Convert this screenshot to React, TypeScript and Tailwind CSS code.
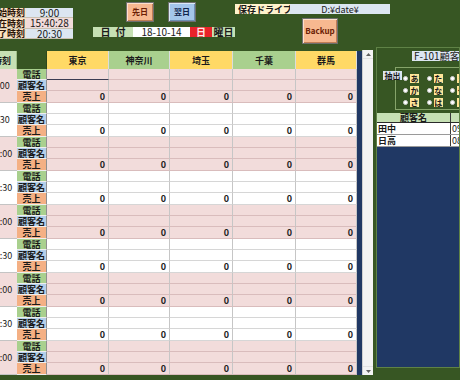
import React from "react";

const slots = ["9:00", "9:30", "10:00", "10:30", "11:00", "11:30", "12:00", "12:30", "13:00"];
const prefs = [
  { name: "東京", bg: "bg-[#ffd966]" },
  { name: "神奈川", bg: "bg-[#a9d08e]" },
  { name: "埼玉", bg: "bg-[#ffd966]" },
  { name: "千葉", bg: "bg-[#a9d08e]" },
  { name: "群馬", bg: "bg-[#ffd966]" },
];
const kinds = [
  { label: "電話", bg: "bg-[#a9d08e]", h: "h-[11px]" },
  { label: "顧客名", bg: "bg-[#b4cfea]", h: "h-[11px]" },
  { label: "売上", bg: "bg-[#f4b084]", h: "h-[12px]" },
];

const COLS = "grid grid-cols-[17px_30px_62px_61px_63px_63px_61px]";

function Top() {
  const info = [
    { l: "開始時刻", v: "9:00", vb: "bg-[#dce6f1]", h: "h-[10px]" },
    { l: "現在時刻", v: "15:40:28", vb: "bg-[#f2dcdb]", h: "h-[11px]" },
    { l: "終了時刻", v: "20:30", vb: "bg-[#dce6f1]", h: "h-[10px]" },
  ];
  const btn =
    "flex items-center justify-center border border-[#6f6f6f] text-[8px] font-bold";
  return (
    <div className="flex h-[47px] items-start">
      <div className="mt-[8px] w-[73px] flex flex-col">
        {info.map((r) => (
          <div key={r.l} className={`flex ${r.h} border-b border-[#c9c0b0]`}>
            <div className="w-[26px] overflow-hidden flex justify-end items-center bg-[#fbe2c2] pr-[1px]">
              <span className="shrink-0 whitespace-nowrap text-[9px] font-bold text-[#2a1408]">{r.l}</span>
            </div>
            <div className={`w-[47px] flex items-center justify-center ${r.vb} text-[10px] text-[#1a1a1a]`}>
              {r.v}
            </div>
          </div>
        ))}
      </div>
      <div className="ml-[20px] w-[142px] flex flex-col">
        <div className="flex pt-[2px] h-[22px]">
          <div
            className={`ml-[33px] w-[28px] h-[20px] ${btn} bg-[#f7b890] text-[#6b1d05] shadow-[inset_1px_1px_0_#fde0cc,inset_-1px_-1px_0_#c07d55]`}
          >
            先日
          </div>
          <div
            className={`ml-[14px] w-[28px] h-[20px] ${btn} bg-[#a4c6ea] text-[#10244a] shadow-[inset_1px_1px_0_#dbe9f7,inset_-1px_-1px_0_#6d8fb5]`}
          >
            翌日
          </div>
        </div>
        <div className="mt-[5px] flex h-[10px] text-[10px]">
          <div className="w-[40px] bg-[#c6e0b4] flex items-center justify-center font-bold tracking-[5px] pl-[5px]">日付</div>
          <div className="w-[57px] bg-white flex items-center justify-center">18-10-14</div>
          <div className="w-[22px] bg-[#e8232a] flex items-center justify-center text-[#ffe8e8] font-bold">日</div>
          <div className="w-[23px] bg-[#c6e0b4] flex items-center justify-center font-bold">曜日</div>
        </div>
      </div>
      <div className="w-[155px] flex flex-col">
        <div className="mt-[4px] flex h-[10px]">
          <div className="w-[55px] bg-[#fff2cc] flex items-center pl-[3px] text-[9px] font-bold whitespace-nowrap">保存ドライブ</div>
          <div className="w-[100px] bg-[#dce6f1] flex items-center justify-center text-[9px]">D:¥date¥</div>
        </div>
        <div
          className={`mt-[4px] ml-[67px] w-[36px] h-[26px] ${btn} bg-[#f7b890] text-[#6b1d05] shadow-[inset_1px_1px_0_#fde0cc,inset_-1px_-1px_0_#c07d55]`}
        >
          Backup
        </div>
      </div>
    </div>
  );
}

function Slot({ time, idx }: { time: string; idx: number }) {
  const pink = idx % 2 === 0;
  const rowBg = pink ? "bg-[#f2dcdb]" : "bg-white";
  const lineB = pink ? "border-[#d9bcbc]" : "border-[#d6d6d6]";
  return (
    <div className={`${COLS} grid-rows-[11px_11px_12px]`}>
      <div className={`row-span-3 ${rowBg} border-b border-[#c4c4c4] overflow-hidden flex items-center`}>
        <div className="w-[32px] -ml-[15px] shrink-0 text-center text-[9px] text-[#222]">{time}</div>
      </div>
      {kinds.map((k, ki) => (
        <React.Fragment key={k.label}>
          <div
            className={`${k.bg} border-b border-r border-b-[#eeeeee] border-r-[#8f8f8f] flex items-center justify-center text-[9px] font-bold text-[#1a1a1a] whitespace-nowrap overflow-hidden`}
          >
            {k.label}
          </div>
          {prefs.map((p, pi) => (
            <div
              key={p.name}
              className={`${rowBg} border-r border-r-[#c6c6c6] border-b ${
                idx === 0 && ki === 0 && pi === 0 ? "border-b-[#3c3c52]" : lineB
              } flex items-center justify-end pr-[3px] text-[9px] font-bold text-[#222]`}
            >
              {ki === 2 ? "0" : ""}
            </div>
          ))}
        </React.Fragment>
      ))}
    </div>
  );
}

function Grid() {
  return (
    <div className="mt-[4px] w-[357px] flex flex-col">
      <div className={`${COLS} h-[18px]`}>
        <div className="bg-[#c6e0b4] overflow-hidden flex items-center border-r border-[#9fbf86]">
          <div className="w-[32px] -ml-[14px] shrink-0 text-center text-[9px] font-bold">時刻</div>
        </div>
        <div className="bg-[#375623] border-r border-[#2c461b]" />
        {prefs.map((p) => (
          <div
            key={p.name}
            className={`${p.bg} border-r border-[#dcdcdc] flex items-center justify-center text-[9px] font-bold`}
          >
            {p.name}
          </div>
        ))}
      </div>
      {slots.map((t, i) => (
        <Slot key={t} time={t} idx={i} />
      ))}
    </div>
  );
}

function Scrollbar() {
  return (
    <div className="mt-[3px] w-[11px] h-[325px] bg-[#f3f3f3] border-l border-[#cfcfcf] flex flex-col justify-between">
      <div className="h-[9px] flex items-center justify-center border-b border-[#e2e2e2]">
        <svg width="5" height="3" viewBox="0 0 5 3">
          <path d="M0 3 L2.5 0 L5 3 Z" fill="#606060" />
        </svg>
      </div>
      <div className="h-[9px] flex items-center justify-center border-t border-[#e2e2e2]">
        <svg width="5" height="3" viewBox="0 0 5 3">
          <path d="M0 0 L2.5 3 L5 0 Z" fill="#606060" />
        </svg>
      </div>
    </div>
  );
}

function Radio({ ch }: { ch: string }) {
  return (
    <div className="flex items-center gap-[2px] h-[9px]">
      <div className="w-[5px] h-[5px] rounded-full bg-white border border-[#cfcfcf]" />
      <div className="w-[9px] h-[9px] bg-[#ffe699] flex items-center justify-center text-[8px] font-bold">{ch}</div>
    </div>
  );
}

function Panel() {
  const cols = [["あ", "か", "さ"], ["た", "な", "は"], ["ま", "や", "ら"]];
  return (
    <div className="w-[84px] h-[321px] border border-[#5f8246] bg-[#375623] flex flex-col overflow-hidden">
      <div className="mt-[3px] pl-[35px] h-[10px] flex">
        <div className="w-[60px] shrink-0 bg-[#dce6f1] flex items-center pl-[2px] text-[10px] whitespace-nowrap overflow-hidden">
          F-101顧客管理
        </div>
      </div>
      <div className="relative mt-[6px] h-[43px]">
        <div className="ml-[18px] h-[43px] w-[80px] border border-[#86a46a] flex pl-[7px] pt-[6px]">
          {cols.map((c, i) => (
            <div key={i} className="w-[25px] flex flex-col gap-[3px]">
              {c.map((ch) => (
                <Radio key={ch} ch={ch} />
              ))}
            </div>
          ))}
        </div>
        <div className="absolute left-[6px] top-[4px] w-[19px] h-[9px] bg-[#dce6f1] flex items-center justify-center text-[8px] font-bold">
          抽出
        </div>
      </div>
      <div className="mt-[3px] flex flex-col">
        <div className="flex h-[10px] border-b border-[#2a2a2a]">
          <div className="w-[74px] bg-[#c6e0b4] border-r border-[#3a3a3a] flex items-center justify-center text-[9px] font-bold">
            顧客名
          </div>
          <div className="flex-1 bg-[#c6e0b4]" />
        </div>
        {[
          ["田中", "090"],
          ["日高", "080"],
        ].map(([n, t]) => (
          <div key={n} className="flex h-[12px] bg-white border-b border-[#9a9a9a]">
            <div className="w-[74px] border-r border-[#3a3a3a] flex items-center pl-[1px] text-[9px] font-bold">{n}</div>
            <div className="flex-1 flex items-center pl-[1px] text-[9px] overflow-hidden whitespace-nowrap">{t}-1234</div>
          </div>
        ))}
      </div>
      <div className="flex-1 bg-[#203864]" />
    </div>
  );
}

export default function App() {
  return (
    <div className="w-[460px] h-[380px] overflow-hidden bg-[#375623] [font-family:'Noto_Sans_CJK_JP','Noto_Sans',sans-serif] text-[#1a1a1a] leading-none">
      <Top />
      <div className="flex items-start">
        <Grid />
        <div className="mt-[4px] w-[5px] h-[324px] bg-[#203864]" />
        <Scrollbar />
        <div className="w-[3px] shrink-0" />
        <Panel />
      </div>
    </div>
  );
}
